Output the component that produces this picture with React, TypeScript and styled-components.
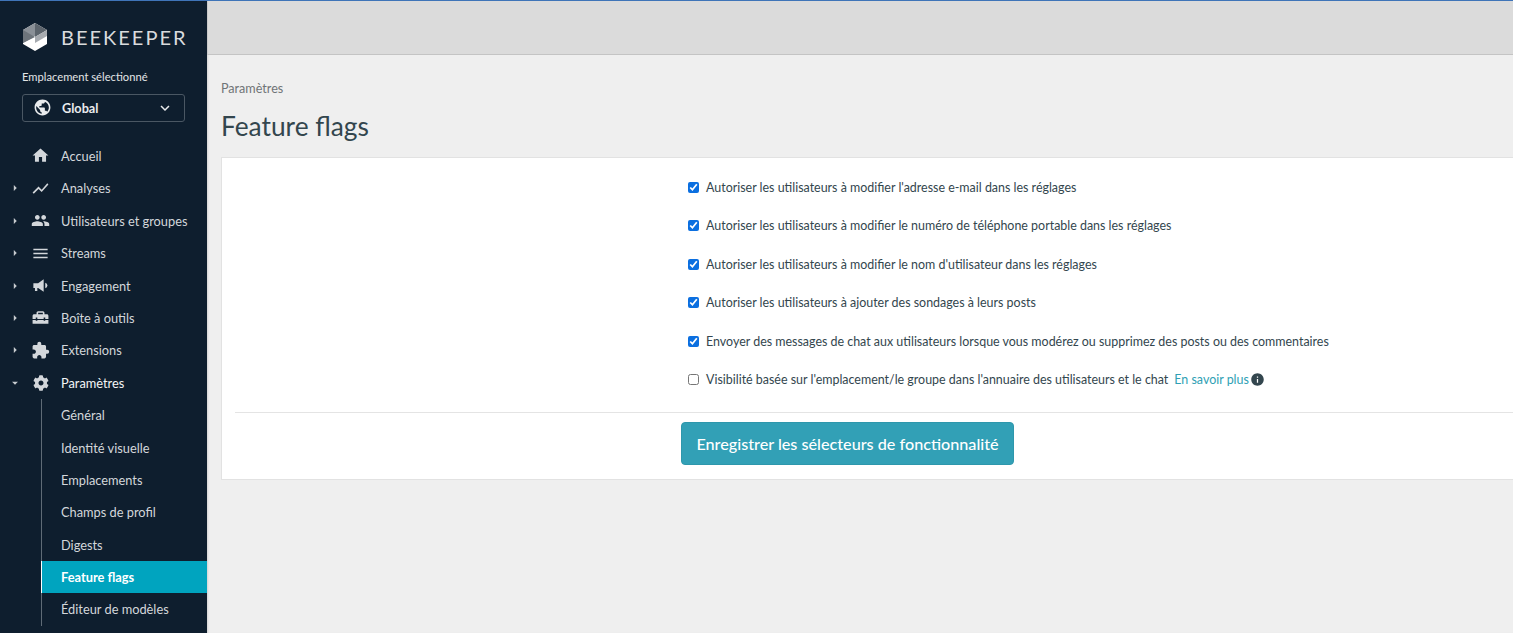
import React from "react";
import styled, { createGlobalStyle } from "styled-components";
import {
  MdHome,
  MdShowChart,
  MdPeople,
  MdMenu,
  MdHomeRepairService,
  MdExtension,
  MdPublic,
  MdKeyboardArrowDown,
  MdArrowRight,
  MdArrowDropDown,
  MdInfo,
} from "react-icons/md";
import { FaCog } from "react-icons/fa";

const GlobalStyle = createGlobalStyle`
  html, body {
    margin: 0;
    height: 100%;
    overflow: hidden;
    background: #efefef;
  }
  * { box-sizing: border-box; }
  body {
    font-family: "Lato", "Noto Sans", sans-serif;
    color: #2f3f47;
  }
`;

const Layout = styled.div`
  display: flex;
  height: 633px;
  border-top: 1px solid #3f74b8;
`;

const Sidebar = styled.aside`
  width: 207px;
  flex: none;
  background: #0e1e2e;
  color: #d3d7db;
  display: flex;
  flex-direction: column;
  overflow: hidden;
`;

const Brand = styled.div`
  display: flex;
  align-items: center;
  gap: 12px;
  padding: 0 0 0 21px;
  height: 72px;
`;

const BrandName = styled.span`
  font-family: "Lato", sans-serif;
  font-size: 20px;
  letter-spacing: 2px;
  color: #d9dbdd;
  line-height: 30px;
`;

const LocationLabel = styled.div`
  font-size: 11.2px;
  line-height: 16px;
  margin: -4px 0 0 22px;
  color: #e3e5e7;
`;

const LocationSelect = styled.div`
  display: flex;
  align-items: center;
  width: 163px;
  height: 28px;
  margin: 9px 0 0 22px;
  padding: 0 10px 1px 10px;
  border: 1px solid #4a5763;
  border-radius: 3px;
  color: #e9ebed;
  font-size: 12.7px;
  font-weight: 700;
  gap: 10px;
  svg:last-child { margin-left: auto; }
`;

const Nav = styled.nav`
  margin-top: 17.8px;
  display: flex;
  flex-direction: column;
`;

const NavRow = styled.div<{ $open?: boolean }>`
  display: flex;
  align-items: center;
  height: 32.4px;
  font-size: 12.8px;
  color: ${(p) => (p.$open ? "#f4f5f6" : "#d3d7db")};
`;

const Caret = styled.span`
  width: 30px;
  flex: none;
  padding-left: 8px;
  display: flex;
  font-size: 14px;
  color: #c8ccd0;
`;

const NavIcon = styled.span`
  width: 21px;
  flex: none;
  margin-right: 10px;
  display: flex;
  justify-content: center;
  font-size: 19px;
  color: #d3d7db;
`;

const SubNav = styled.div`
  margin-left: 41px;
  border-left: 1px solid #5f6b76;
  display: flex;
  flex-direction: column;
  height: 227px;
`;

const SubItem = styled.div<{ $active?: boolean }>`
  height: 32.4px;
  flex: none;
  display: flex;
  align-items: center;
  padding-left: 19px;
  margin-left: -1px;
  border-left: 1px solid ${(p) => (p.$active ? "#ffffff" : "transparent")};
  font-size: 12.8px;
  font-weight: ${(p) => (p.$active ? 700 : 400)};
  color: ${(p) => (p.$active ? "#ffffff" : "#d3d7db")};
  background: ${(p) => (p.$active ? "#00a4bf" : "transparent")};
`;

const Main = styled.main`
  flex: 1;
  min-width: 0;
  display: flex;
  flex-direction: column;
  overflow: hidden;
  box-shadow: inset 2px 0 2px -1px rgba(0, 0, 0, 0.12);
`;

const TopBar = styled.header`
  height: 54px;
  flex: none;
  background: #dbdbdb;
  border-bottom: 1px solid #c4c4c4;
  border-left: 1px solid #c9c9c9;
`;

const Content = styled.div`
  padding: 25px 0 0 14px;
  width: 1320px;
`;

const Breadcrumb = styled.div`
  font-size: 12.6px;
  line-height: 18px;
  color: #6f7477;
`;

const Title = styled.h1`
  font-size: 26.3px;
  font-weight: 400;
  line-height: 36px;
  margin: 10px 0 13px;
  color: #33464e;
`;

const Card = styled.section`
  background: #fff;
  border: 1px solid #e2e2e2;
  height: 323px;
  padding-left: 13px;
`;

const FlagList = styled.div`
  height: 255px;
  padding: 10.4px 0 0 453px;
  border-bottom: 1px solid #e4e4e4;
  display: flex;
  flex-direction: column;
`;

const FlagRow = styled.label`
  height: 38.4px;
  flex: none;
  display: flex;
  align-items: center;
  font-size: 12.45px;
  color: #33464e;
`;

const Check = styled.input.attrs({ type: "checkbox" })`
  width: 11px;
  height: 11px;
  margin: 0 7px 0 0;
  accent-color: #0b6fe0;
  flex: none;
`;

const LearnMore = styled.a`
  color: #2f9fb4;
  margin-left: 6px;
  text-decoration: none;
`;

const InfoIcon = styled(MdInfo)`
  margin-left: 1px;
  font-size: 15px;
  color: #33464e;
`;

const Actions = styled.div`
  padding: 9px 0 0 446px;
`;

const SaveButton = styled.button`
  width: 333px;
  height: 43px;
  background: #32a0b6;
  border: 1px solid #2e97ac;
  border-radius: 4px;
  color: #fff;
  font-family: inherit;
  font-size: 16.2px;
  font-weight: 500;
  padding: 0;
`;

const Logo = () => (
  <svg width="28" height="30" viewBox="0 0 28 30">
    <polygon points="14,1 26,8 26,22 14,29 2,22 2,8" fill="#fff" />
    <polygon points="14,1 2,8 2,21 14,14" fill="#8a9097" />
    <polygon points="14,1 26,8 14,15" fill="#5c646c" />
    <polygon points="2,8 14,15 2,21" fill="#6d747b" />
    <polygon points="14,15 26,8 26,14 14,21" fill="#a7abb0" />
  </svg>
);

const Megaphone = () => (
  <svg width="1em" height="1em" viewBox="0 0 24 24" fill="currentColor">
    <path d="M3 9h6l7-5v16l-7-5H8v4H5v-4H3z" />
    <path d="M18 8.5a3.6 3.6 0 0 1 0 7z" />
  </svg>
);

const topItems = [
  { label: "Accueil", icon: <MdHome />, caret: false },
  { label: "Analyses", icon: <MdShowChart />, caret: true },
  { label: "Utilisateurs et groupes", icon: <MdPeople />, caret: true },
  { label: "Streams", icon: <MdMenu />, caret: true },
  { label: "Engagement", icon: <Megaphone />, caret: true },
  { label: "Boîte à outils", icon: <MdHomeRepairService />, caret: true },
  { label: "Extensions", icon: <MdExtension />, caret: true },
];

const subItems = [
  "Général",
  "Identité visuelle",
  "Emplacements",
  "Champs de profil",
  "Digests",
  "Feature flags",
  "Éditeur de modèles",
];

const flags = [
  { text: "Autoriser les utilisateurs à modifier l'adresse e-mail dans les réglages", on: true },
  { text: "Autoriser les utilisateurs à modifier le numéro de téléphone portable dans les réglages", on: true },
  { text: "Autoriser les utilisateurs à modifier le nom d'utilisateur dans les réglages", on: true },
  { text: "Autoriser les utilisateurs à ajouter des sondages à leurs posts", on: true },
  { text: "Envoyer des messages de chat aux utilisateurs lorsque vous modérez ou supprimez des posts ou des commentaires", on: true },
];

export default function App() {
  return (
    <>
      <GlobalStyle />
      <Layout>
        <Sidebar>
          <Brand>
            <Logo />
            <BrandName>BEEKEEPER</BrandName>
          </Brand>
          <LocationLabel>Emplacement sélectionné</LocationLabel>
          <LocationSelect>
            <MdPublic size={19} />
            <span>Global</span>
            <MdKeyboardArrowDown size={18} />
          </LocationSelect>
          <Nav>
            {topItems.map((item) => (
              <NavRow key={item.label}>
                <Caret>{item.caret && <MdArrowRight />}</Caret>
                <NavIcon>{item.icon}</NavIcon>
                {item.label}
              </NavRow>
            ))}
            <NavRow $open>
              <Caret><MdArrowDropDown /></Caret>
              <NavIcon><FaCog size={16} /></NavIcon>
              Paramètres
            </NavRow>
            <SubNav>
              {subItems.map((s) => (
                <SubItem key={s} $active={s === "Feature flags"}>{s}</SubItem>
              ))}
            </SubNav>
          </Nav>
        </Sidebar>
        <Main>
          <TopBar />
          <Content>
            <Breadcrumb>Paramètres</Breadcrumb>
            <Title>Feature flags</Title>
            <Card>
              <FlagList>
                {flags.map((f) => (
                  <FlagRow key={f.text}>
                    <Check defaultChecked={f.on} />
                    {f.text}
                  </FlagRow>
                ))}
                <FlagRow>
                  <Check />
                  Visibilité basée sur l'emplacement/le groupe dans l'annuaire des utilisateurs et le chat
                  <LearnMore>En savoir plus</LearnMore>
                  <InfoIcon />
                </FlagRow>
              </FlagList>
              <Actions>
                <SaveButton>Enregistrer les sélecteurs de fonctionnalité</SaveButton>
              </Actions>
            </Card>
          </Content>
        </Main>
      </Layout>
    </>
  );
}
